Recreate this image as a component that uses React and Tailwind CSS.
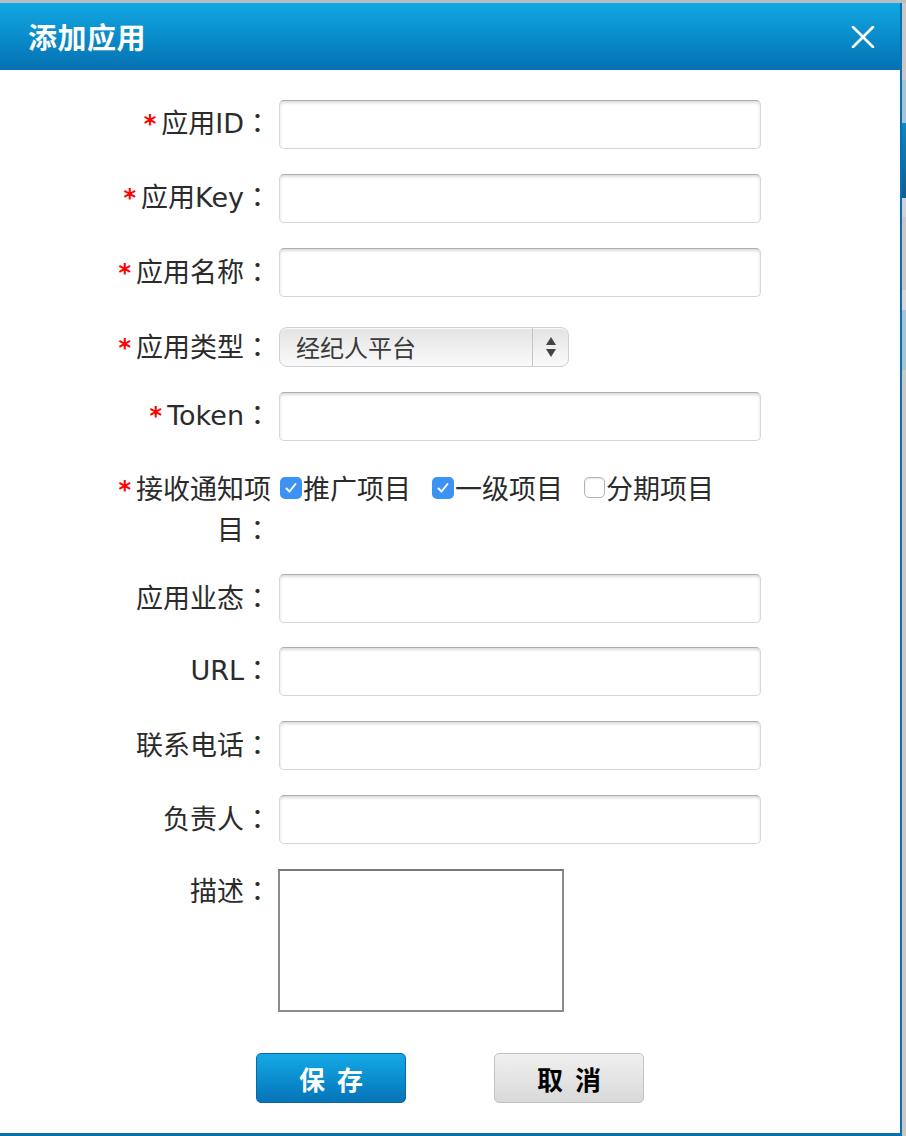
const CJK = "font-['Noto_Sans_CJK_SC',sans-serif]";
const LATIN = "font-['DejaVu_Sans',sans-serif]";

function Star() {
  return (
    <span className={`inline-block leading-none relative -top-[1px] mr-[5px] text-[24px] font-bold text-[#f00] ${LATIN}`}>*</span>
  );
}

function Colon() {
  return <span className="font-['Noto_Sans_CJK_TC',sans-serif]">：</span>;
}

function Label({ children, required, className = "" }) {
  return (
    <div className={`w-[161px] shrink-0 text-right text-[27px] leading-[41px] text-[#2b2b2b] ${className}`}>
      {required && <Star />}
      {children}
      <Colon />
    </div>
  );
}

function Latin({ children }) {
  return <span className={LATIN}>{children}</span>;
}

function TextInput() {
  return (
    <input
      type="text"
      className="w-[482px] h-[49px] rounded-[5px] border border-[#d6d6d6] border-t-[#adadad] bg-white shadow-[inset_0_2px_3px_rgba(0,0,0,0.14)] outline-none"
    />
  );
}

function Row({ label, required, children, className = "h-[49px]" }) {
  return (
    <div className={`flex items-center gap-[8px] ${className}`}>
      <Label required={required} className="pb-[4px]">{label}</Label>
      {children}
    </div>
  );
}

function Check({ checked, text }) {
  return (
    <div className="flex items-center">
      {checked ? (
        <div className="w-[22px] h-[22px] rounded-[5px] bg-[#3d93f3] flex items-center justify-center">
          <svg width="14" height="14" viewBox="0 0 14 14">
            <path d="M2.5 7.5 L5.5 10.5 L11.5 3" stroke="white" strokeWidth="2" fill="none" strokeLinecap="round" strokeLinejoin="round" />
          </svg>
        </div>
      ) : (
        <div className="w-[21px] h-[21px] rounded-[5px] border border-[#b4b4b4] bg-white shadow-[inset_0_1px_2px_rgba(0,0,0,0.1)]" />
      )}
      <span className="ml-[1px] text-[27px] leading-[41px] text-[#2b2b2b]">{text}</span>
    </div>
  );
}

export default function App() {
  return (
    <div className={`w-[906px] h-[1136px] flex flex-col bg-[#c6c8ca] ${CJK}`}>
      <div className="h-[3px] bg-[#babec2] shrink-0" />
      <div className="flex flex-1">
        {/* dialog */}
        <div className="w-[902px] flex flex-col bg-white border-r-2 border-b-[3px] border-[#0a6fb0]">
          <div className="h-[67px] shrink-0 flex items-center justify-between pl-[28px] pr-[25px] bg-gradient-to-b from-[#11a8e3] to-[#0671b2]">
            <span className="text-[29px] font-bold text-white tracking-[0.5px]">添加应用</span>
            <svg width="24" height="22" viewBox="0 0 24 22">
              <path d="M2 1 L22 21 M22 1 L2 21" stroke="white" strokeWidth="2.6" strokeLinecap="round" />
            </svg>
          </div>

          <div className="flex flex-col gap-[25px] pt-[30px] pl-[110px]">
            <Row label={<>应用<Latin>ID</Latin></>} required>
              <TextInput />
            </Row>
            <Row label={<>应用<Latin>Key</Latin></>} required>
              <TextInput />
            </Row>
            <Row label="应用名称" required>
              <TextInput />
            </Row>
            <Row label="应用类型" required className="h-[40px] mt-[5px]">
              <div className="w-[290px] h-[40px] flex rounded-[8px] border border-[#cdd1d5] bg-gradient-to-b from-[#e3e3e3] via-[#efefef] to-[#fafafa] shadow-[inset_0_1px_0_rgba(255,255,255,0.8)]">
                <div className="flex-1 flex items-center pl-[16px] text-[24px] text-[#3a3a3a]">经纪人平台</div>
                <div className="w-[36px] border-l border-[#c4c4c4] flex items-center justify-center">
                  <svg width="12" height="22" viewBox="0 0 12 22">
                    <path d="M6 1 L11 9 L1 9 Z M1 13 L11 13 L6 21 Z" fill="#444" />
                  </svg>
                </div>
              </div>
            </Row>
            <Row label={<Latin>Token</Latin>} required>
              <TextInput />
            </Row>
            <div className="flex items-start gap-[9px] h-[82px] mt-[1px]">
              <div className="w-[161px] shrink-0 flex flex-col items-end text-[27px] leading-[41px] text-[#2b2b2b]">
                <div className="whitespace-nowrap">
                  <Star />
                  接收通知项
                </div>
                <div className="whitespace-nowrap">
                  目<Colon />
                </div>
              </div>
              <div className="h-[41px] flex items-center gap-[21px]">
                <Check checked text="推广项目" />
                <Check checked text="一级项目" />
                <Check text="分期项目" />
              </div>
            </div>
            <Row label="应用业态">
              <TextInput />
            </Row>
            <Row label={<Latin>URL</Latin>} className="h-[49px] -mt-[1px]">
              <TextInput />
            </Row>
            <Row label="联系电话">
              <TextInput />
            </Row>
            <Row label="负责人">
              <TextInput />
            </Row>
            <div className="flex items-start gap-[7px]">
              <Label>描述</Label>
              <textarea className="w-[286px] h-[143px] border-2 border-[#8c8c8c] border-t-[#777] bg-white outline-none resize-none" />
            </div>
          </div>

          <div className="flex justify-center gap-[88px] mt-[41px]">
            <button className="w-[150px] h-[50px] flex items-center justify-center gap-[12px] rounded-[5px] border border-[#0a68a6] bg-gradient-to-b from-[#14aae6] to-[#0674b8] text-white text-[26px] font-bold">
              <span>保</span>
              <span>存</span>
            </button>
            <button className="w-[150px] h-[50px] flex items-center justify-center gap-[12px] rounded-[5px] border border-[#c2c2c2] bg-gradient-to-b from-[#f0f0f0] to-[#d9d9d9] text-black text-[26px] font-bold">
              <span>取</span>
              <span>消</span>
            </button>
          </div>
        </div>

        {/* page behind the dialog */}
        <div className="flex-1 flex flex-col">
          <div className="h-[77px] bg-[#c6c8ca]" />
          <div className="h-[43px] bg-[#a9c3d3]" />
          <div className="h-[75px] bg-gradient-to-b from-[#0b88c8] to-[#0a5f95]" />
          <div className="h-[19px] bg-[#cdd3d8]" />
          <div className="h-[73px] bg-[#c8c8c8]" />
          <div className="h-[20px] bg-[#d8d8d8]" />
          <div className="h-[60px] bg-[#a9c3d3]" />
          <div className="flex-1 bg-[#c8c8c8]" />
        </div>
      </div>
    </div>
  );
}
